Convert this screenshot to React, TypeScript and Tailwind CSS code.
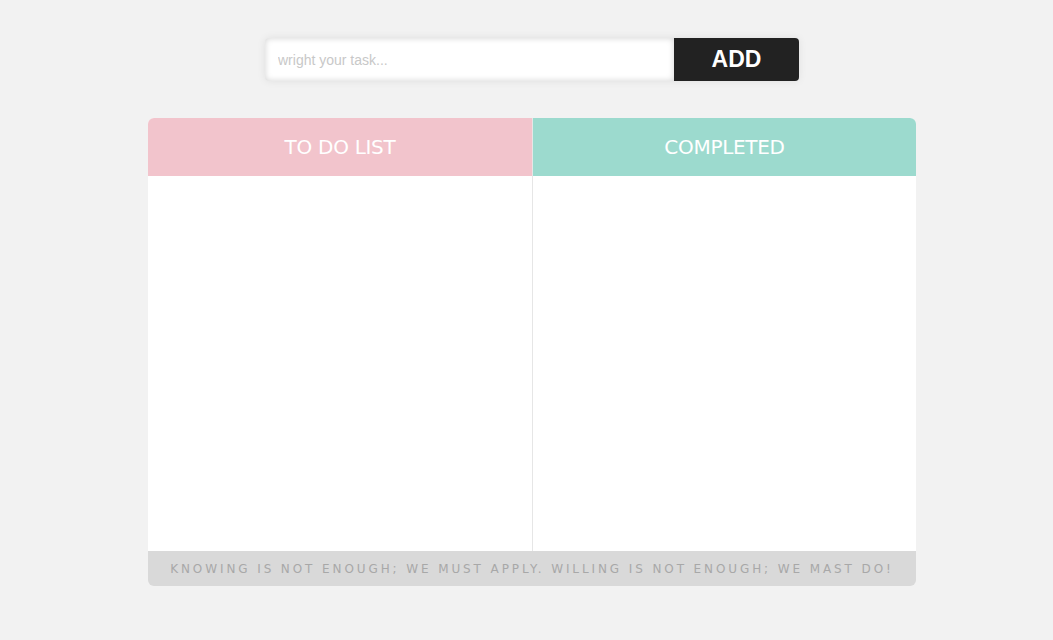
export default function App() {
  return (
    <div className="min-h-[640px] w-full bg-[#f2f2f2] pl-[11px] pt-[38px]">
      <div className="mx-auto flex h-[43px] w-[534px] rounded-[4px] shadow-[0_0_8px_rgba(0,0,0,0.08)]">
        <input
          type="text"
          placeholder="wright your task..."
          className="h-full flex-1 rounded-l-[4px] bg-white pl-[13px] pr-3 text-[14px] text-gray-700 shadow-[inset_0_0_6px_rgba(0,0,0,0.18)] outline-none placeholder:text-[#c8c8c8] [font-family:'Liberation_Sans',Arial,sans-serif]"
        />
        <button className="h-full w-[125px] rounded-r-[4px] bg-[#222222] text-[23px] font-bold text-white [font-family:'Liberation_Sans',Arial,sans-serif]">
          ADD
        </button>
      </div>

      <div className="mx-auto mt-[37px] w-[768px] overflow-hidden rounded-[6px] [font-family:'DejaVu_Sans','Noto_Sans',sans-serif]">
        <div className="grid h-[433px] grid-cols-[384px_1px_383px]">
          <div className="flex flex-col bg-white">
            <div className="flex h-[58px] items-center justify-center bg-[#f2c4cc] text-[20px] font-medium tracking-[-0.3px] text-white">
              TO DO LIST
            </div>
            <ul className="flex-1"></ul>
          </div>
          <div className="bg-[#e6e6e6]"></div>
          <div className="flex flex-col bg-white">
            <div className="flex h-[58px] items-center justify-center bg-[#9cdace] text-[20px] font-medium tracking-[-0.3px] text-white">
              COMPLETED
            </div>
            <ul className="flex-1"></ul>
          </div>
        </div>
        <div className="flex h-[35px] items-center justify-center bg-[#d9d9d9] text-[12px] font-medium tracking-[2.9px] text-[#a8a8a8]">
          KNOWING IS NOT ENOUGH; WE MUST APPLY. WILLING IS NOT ENOUGH; WE MAST DO!
        </div>
      </div>
    </div>
  );
}
